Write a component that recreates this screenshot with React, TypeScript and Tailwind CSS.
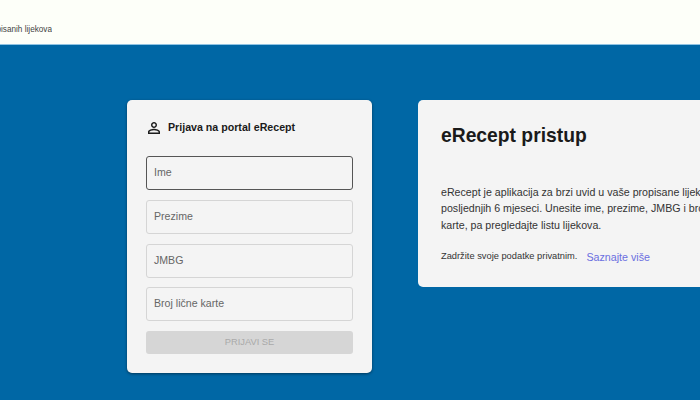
import React from 'react';

const fields = ['Ime', 'Prezime', 'JMBG', 'Broj lične karte'];

function PersonIcon() {
  return (
    <svg viewBox="0 0 24 24" className="-ml-[1px] h-[18px] w-[18px] shrink-0 fill-[#1c1c1c]">
      <path d="M12 5.9c1.16 0 2.1.94 2.1 2.1s-.94 2.1-2.1 2.1S9.9 9.16 9.9 8s.94-2.1 2.1-2.1m0 9c2.97 0 6.1 1.46 6.1 2.1v1.1H5.9V17c0-.64 3.13-2.1 6.1-2.1M12 4C9.79 4 8 5.79 8 8s1.79 4 4 4 4-1.79 4-4-1.79-4-4-4zm0 9c-2.67 0-8 1.34-8 4v3h16v-3c0-2.66-5.33-4-8-4z" />
    </svg>
  );
}

export default function App() {
  return (
    <div className="flex h-[400px] w-[700px] flex-col overflow-hidden bg-[#0067a5] font-['Liberation_Sans',Arial,sans-serif]">
      {/* Header */}
      <header className="flex h-[45px] shrink-0 border-b border-[#8fc3e3] bg-[#fdfff9]">
        <div className="flex h-[44px] w-[52px] items-center justify-end overflow-hidden pt-[16px]">
          <span className="whitespace-nowrap text-[8.2px] text-[#444]">Pregled propisanih lijekova</span>
        </div>
      </header>

      <main className="flex items-start gap-[46px] pl-[127px] pt-[55px]">
        {/* Login card */}
        <section className="w-[245px] shrink-0 rounded-[5px] bg-[#f4f4f4] px-[19px] pb-[19px] pt-[19px] shadow-[0_1px_3px_rgba(0,0,0,0.45)]">
          <div className="flex h-[18px] items-center gap-[5px]">
            <PersonIcon />
            <h2 className="whitespace-nowrap text-[10.65px] font-bold text-[#1a1a1a]">Prijava na portal eRecept</h2>
          </div>
          <form className="mt-[19px] flex flex-col gap-[9.75px]">
            {fields.map((label, i) => (
              <div
                key={label}
                className={
                  i === 0
                    ? 'flex h-[34px] items-center rounded-[3px] border border-[#555] px-[7px] text-[10.6px] text-[#666]'
                    : 'flex h-[34px] items-center rounded-[3px] border border-[#d5d5d5] px-[7px] text-[10.6px] text-[#666]'
                }
              >
                {label}
              </div>
            ))}
            <div className="flex h-[23px] items-center justify-center rounded-[3px] bg-[#d6d6d6] text-[9.3px] text-[#a9a9a9]">
              PRIJAVI SE
            </div>
          </form>
        </section>

        {/* Info card */}
        <section className="h-[187px] w-[340px] shrink-0 rounded-[5px] bg-[#f4f4f4] pl-[23px] pt-[23px]">
          <h1 className="text-[19.3px] font-bold leading-[26px] text-[#1a1a1a]">eRecept pristup</h1>
          <p className="mt-[35px] w-[305px] text-[10.65px] leading-[16.4px] text-[#333]">
            eRecept je aplikacija za brzi uvid u vaše propisane lijekove iz posljednjih 6 mjeseci. Unesite ime, prezime, JMBG i broj lične karte, pa pregledajte listu lijekova.
          </p>
          <div className="mt-[16px] flex items-center gap-[9px]">
            <span className="text-[9.3px] text-[#333]">Zadržite svoje podatke privatnim.</span>
            <a className="text-[10.7px] text-[#6a6ee0]">Saznajte više</a>
          </div>
        </section>
      </main>
    </div>
  );
}
